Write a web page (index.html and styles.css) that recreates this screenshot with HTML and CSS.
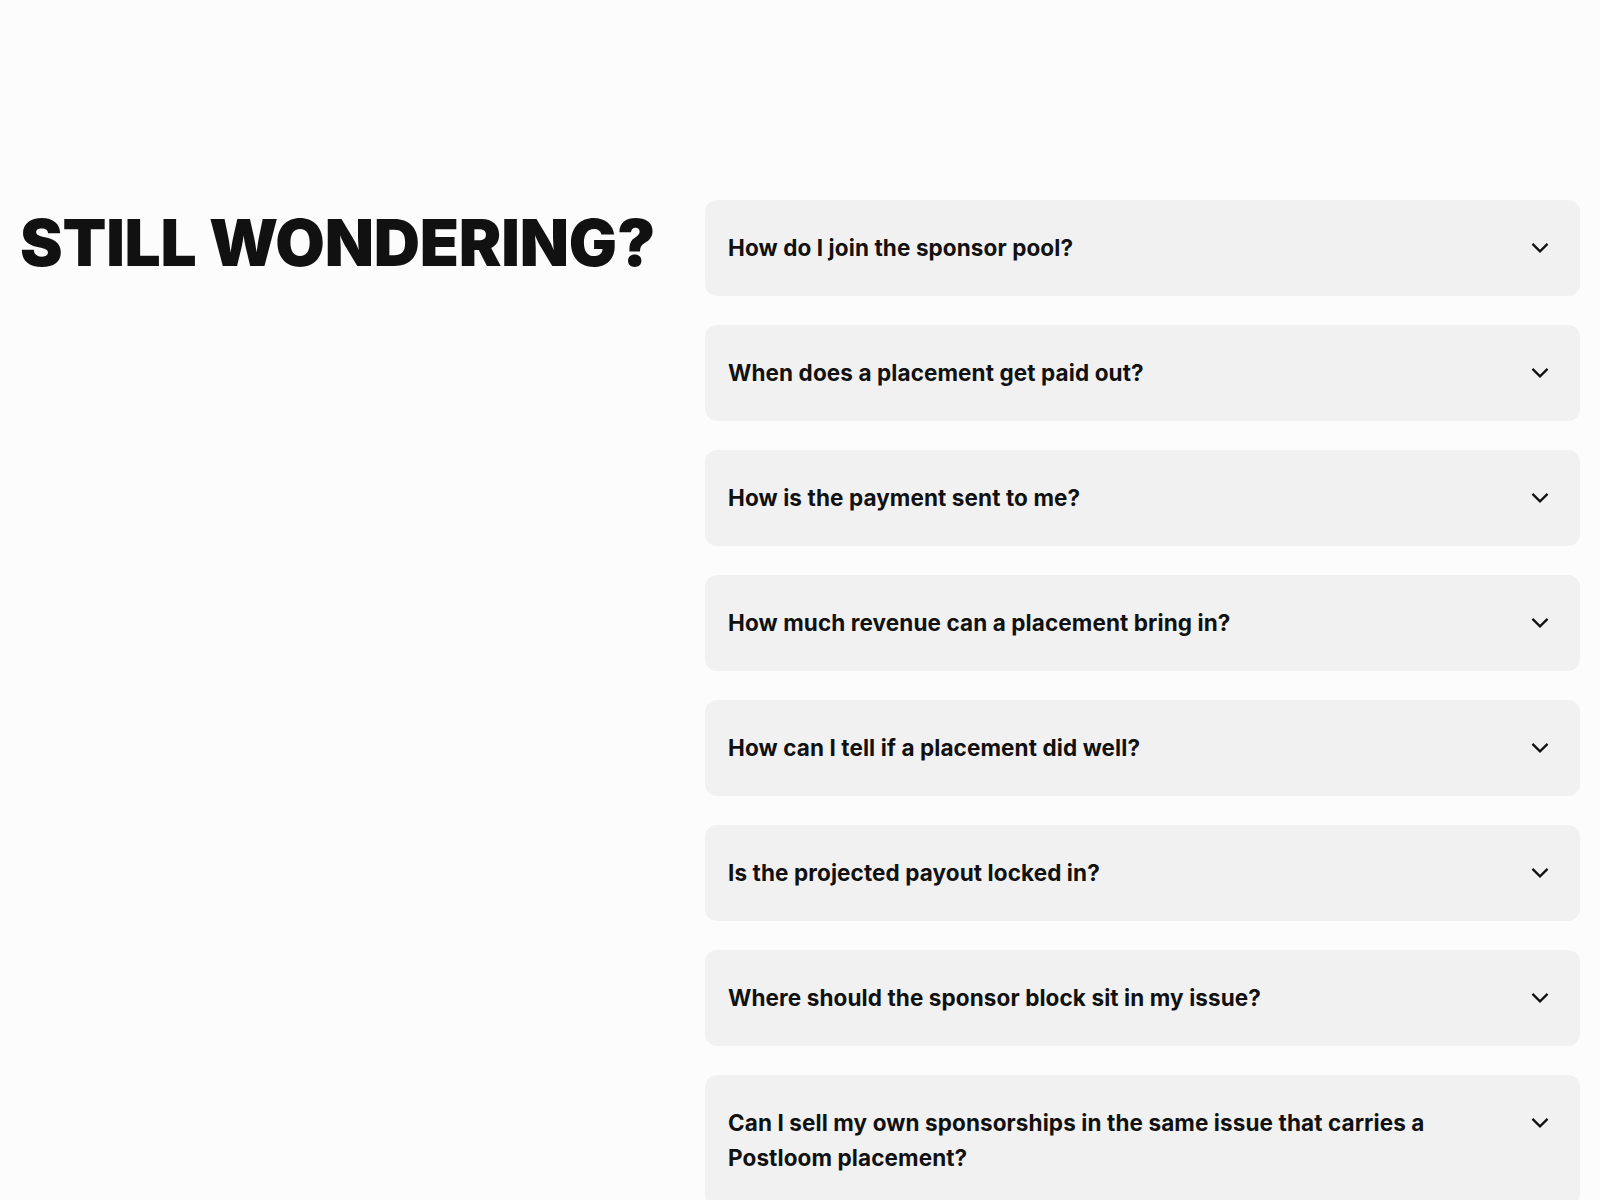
FILE: index.html
```html
<!DOCTYPE html>
<html lang="en">
<head>
    <meta charset="UTF-8">
    <meta name="viewport" content="width=device-width, initial-scale=1.0">
    <title>FAQ</title>
    <link rel="stylesheet" href="styles.css">
</head>
<body>
    <section class="faq">
        <h2 class="faq-title">STILL WONDERING?</h2>

        <div class="faq-list">
            <div class="faq-item">
                <span class="faq-question">How do I join the sponsor pool?</span>
                <svg class="chevron" viewBox="0 0 16 16"><polyline points="2,5 8,11 14,5"/></svg>
            </div>
            <div class="faq-item">
                <span class="faq-question">When does a placement get paid out?</span>
                <svg class="chevron" viewBox="0 0 16 16"><polyline points="2,5 8,11 14,5"/></svg>
            </div>
            <div class="faq-item">
                <span class="faq-question">How is the payment sent to me?</span>
                <svg class="chevron" viewBox="0 0 16 16"><polyline points="2,5 8,11 14,5"/></svg>
            </div>
            <div class="faq-item">
                <span class="faq-question">How much revenue can a placement bring in?</span>
                <svg class="chevron" viewBox="0 0 16 16"><polyline points="2,5 8,11 14,5"/></svg>
            </div>
            <div class="faq-item">
                <span class="faq-question">How can I tell if a placement did well?</span>
                <svg class="chevron" viewBox="0 0 16 16"><polyline points="2,5 8,11 14,5"/></svg>
            </div>
            <div class="faq-item">
                <span class="faq-question">Is the projected payout locked in?</span>
                <svg class="chevron" viewBox="0 0 16 16"><polyline points="2,5 8,11 14,5"/></svg>
            </div>
            <div class="faq-item">
                <span class="faq-question">Where should the sponsor block sit in my issue?</span>
                <svg class="chevron" viewBox="0 0 16 16"><polyline points="2,5 8,11 14,5"/></svg>
            </div>
            <div class="faq-item">
                <span class="faq-question">Can I sell my own sponsorships in the same issue that carries a Postloom placement?</span>
                <svg class="chevron" viewBox="0 0 16 16"><polyline points="2,5 8,11 14,5"/></svg>
            </div>
        </div>
    </section>
</body>
</html>
```

FILE: styles.css
```css
body {
    margin: 0;
    font-family: Inter, "Noto Sans", Arial, sans-serif;
    background-color: #fcfcfc;
    color: #111111;
}

.faq {
    display: grid;
    grid-template-columns: 1fr 875px;
    gap: 20px;
    padding: 200px 20px 0;
    align-items: start;
}

.faq-title {
    margin: 0;
    padding-top: 8px;
    font-size: 64px;
    font-weight: 900;
    line-height: 1.1;
    letter-spacing: -0.2px;
}

.faq-list {
    display: flex;
    flex-direction: column;
    gap: 29px;
}

.faq-item {
    display: flex;
    align-items: flex-start;
    justify-content: space-between;
    gap: 40px;
    padding: 30px 31px 31px 23px;
    background-color: #f1f1f1;
    border-radius: 12px;
}

.faq-question {
    max-width: 720px;
    font-size: 22.5px;
    font-weight: 700;
    line-height: 35px;
    letter-spacing: 0.1px;
}

.chevron {
    flex: none;
    width: 18px;
    height: 18px;
    margin-top: 8.5px;
    fill: none;
    stroke: #111111;
    stroke-width: 2;
    stroke-linecap: square;
}
```
